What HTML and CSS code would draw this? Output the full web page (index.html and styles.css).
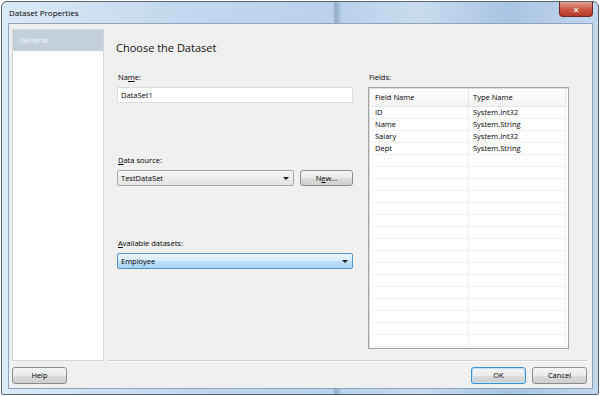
FILE: index.html
```html
<!DOCTYPE html>
<html lang="en">

<head>
    <meta charset="UTF-8">
    <title>Dataset Properties</title>
    <link rel="stylesheet" href="styles.css">
</head>

<body>
    <div class="window">
        <div class="titlebar">
            <span class="title">Dataset Properties</span>
            <span class="close">&#x2715;</span>
        </div>
        <div class="client">
            <div class="top">
                <ul class="nav">
                    <li class="active">General</li>
                </ul>
                <div class="main">
                    <h1>Choose the Dataset</h1>
                    <div class="cols">
                        <div class="left">
                            <label>Na<u>m</u>e:</label>
                            <div class="input">DataSet1</div>

                            <label class="gap"><u>D</u>ata source:</label>
                            <div class="row">
                                <div class="select">TestDataSet<span class="arrow"></span></div>
                                <div class="btn">N<u>e</u>w...</div>
                            </div>

                            <label class="gap"><u>A</u>vailable datasets:</label>
                            <div class="select blue">Employee<span class="arrow"></span></div>
                        </div>
                        <div class="right">
                            <label>Fields:</label>
                            <div class="grid">
                                <div class="head">
                                    <span>Field Name</span>
                                    <span>Type Name</span>
                                </div>
                                <div class="r"><span>ID</span><span>System.Int32</span></div>
                                <div class="r"><span>Name</span><span>System.String</span></div>
                                <div class="r"><span>Salary</span><span>System.Int32</span></div>
                                <div class="r"><span>Dept</span><span>System.String</span></div>
                                <div class="r"><span></span><span></span></div>
                                <div class="r"><span></span><span></span></div>
                                <div class="r"><span></span><span></span></div>
                                <div class="r"><span></span><span></span></div>
                                <div class="r"><span></span><span></span></div>
                                <div class="r"><span></span><span></span></div>
                                <div class="r"><span></span><span></span></div>
                                <div class="r"><span></span><span></span></div>
                                <div class="r"><span></span><span></span></div>
                                <div class="r"><span></span><span></span></div>
                                <div class="r"><span></span><span></span></div>
                                <div class="r"><span></span><span></span></div>
                                <div class="r"><span></span><span></span></div>
                                <div class="r"><span></span><span></span></div>
                                <div class="r"><span></span><span></span></div>
                                <div class="r"><span></span><span></span></div>
                            </div>
                        </div>
                    </div>
                </div>
            </div>
            <div class="footer">
                <div class="btn wide">Help</div>
                <div class="spacer"></div>
                <div class="btn wide default">OK</div>
                <div class="btn wide">Cancel</div>
            </div>
        </div>
    </div>
</body>

</html>
```

FILE: styles.css
```css
body {
    margin: 0;
    background: #fff;
}

ul {
    margin: 0;
    padding: 0;
    list-style: none;
}

h1 {
    margin: 0;
}

body {
    font-family: 'Open Sans', 'DejaVu Sans', sans-serif;
    font-size: 7.5px;
    color: #000;
}

.window {
    width: 598px;
    height: 394px;
    margin: 1px 0 0 1px;
    border: 1px solid #5a6470;
    border-radius: 6px 6px 2px 2px;
    background: linear-gradient(90deg, #dce9f6 0%, #c3d8ee 30%, #b9d1ea 55.5%, #8fa9c6 56%, #b9d1ea 57%, #c9dcef 70%, #a9c4e2 85%, #c3d7ec 100%);
    display: flex;
    flex-direction: column;
    box-sizing: border-box;
}

.titlebar {
    height: 21px;
    display: flex;
    align-items: flex-start;
    padding-left: 7px;
    position: relative;
}

.title {
    font-size: 8px;
    line-height: 22px;
    color: #000;
}

.close {
    position: absolute;
    right: 5px;
    top: 0;
    width: 34px;
    height: 15px;
    border: 1px solid #6e2a22;
    border-top: none;
    border-radius: 0 0 4px 4px;
    background: linear-gradient(#e6a396, #cc5a48 50%, #b83a28 100%);
    color: #fff;
    font-size: 8px;
    font-weight: bold;
    line-height: 15px;
    text-align: center;
    box-sizing: border-box;
}

.client {
    flex: 1;
    margin: 0 5px 5px 6px;
    border: 1px solid #8ea4be;
    background: #f0f0f0;
    display: flex;
    flex-direction: column;
}

.top {
    display: flex;
    padding: 5px 5px 0 3px;
    height: 332px;
}

.nav {
    width: 92px;
    background: #fff;
    border: 1px solid #d6d6d6;
    box-sizing: border-box;
}

.nav li {
    height: 21px;
    line-height: 21px;
    padding-left: 7px;
    background: #c3d0dc;
    color: #f4f7fa;
}

.main {
    flex: 1;
    margin-left: 4px;
    height: 332px;
    border-bottom: 1px solid #d2d2d2;
    box-shadow: 0 1px 0 #fff;
    padding: 11px 0 0 8px;
    box-sizing: border-box;
}

h1 {
    font-size: 11px;
    font-weight: normal;
    line-height: 16px;
    color: #111;
}

.cols {
    display: flex;
    margin-top: 16px;
}

.left {
    width: 236px;
    display: flex;
    flex-direction: column;
    margin-left: 1px;
}

.right {
    width: 201px;
    margin-left: 15px;
    display: flex;
    flex-direction: column;
}

label {
    line-height: 11px;
    height: 11px;
    margin-bottom: 4px;
    padding-left: 1px;
}

label.gap {
    margin-top: 52px;
}

.input {
    height: 16px;
    line-height: 14px;
    border: 1px solid #dcdcdc;
    background: #fff;
    padding-left: 3px;
    box-sizing: border-box;
}

.row {
    display: flex;
}

.select {
    height: 16px;
    flex: 1;
    line-height: 14px;
    border: 1px solid #a8a8a8;
    border-radius: 2px;
    background: linear-gradient(#f6f6f6, #e4e4e4);
    padding-left: 3px;
    box-sizing: border-box;
    display: flex;
    align-items: center;
    justify-content: space-between;
}

.select.blue {
    flex: none;
    border-color: #5a94c4;
    background: linear-gradient(#eaf5fd 0%, #d8ecfb 50%, #bfe0f7 51%, #a8d4f3 100%);
}

.arrow {
    width: 0;
    height: 0;
    border-left: 3px solid transparent;
    border-right: 3px solid transparent;
    border-top: 3px solid #1a1a1a;
    margin-right: 4px;
}

.btn {
    height: 16px;
    line-height: 14px;
    width: 53px;
    margin-left: 6px;
    border: 1px solid #8c8c8c;
    border-radius: 3px;
    background: linear-gradient(#f4f4f4 0%, #ebebeb 50%, #dddddd 51%, #cfcfcf 100%);
    text-align: center;
    box-sizing: border-box;
}

.grid {
    height: 262px;
    border: 1px solid #a3a3a3;
    box-shadow: inset 1px 1px 0 #ddd;
    background: #fff;
    box-sizing: border-box;
    padding: 1px 2px 0;
    overflow: hidden;
}

.head,
.r {
    display: grid;
    grid-template-columns: 98px 1fr;
}

.head {
    height: 17px;
    line-height: 17px;
    background: linear-gradient(#fff, #f3f3f3);
    border-bottom: 1px solid #e6e6e6;
}

.head span {
    padding-left: 4px;
    border-right: 1px solid #e4e4e4;
}

.r {
    height: 12px;
    line-height: 11px;
    border-bottom: 1px solid #f0f0f0;
    box-sizing: border-box;
}

.r span {
    padding-left: 4px;
    border-right: 1px solid #eeeeee;
}

.footer {
    display: flex;
    padding: 6px 5px 0 3px;
}

.footer .btn {
    margin-left: 0;
}

.btn.wide {
    width: 55px;
    height: 17px;
    line-height: 15px;
}

.footer .btn + .btn {
    margin-left: 6px;
}

.btn.default {
    border-color: #3c8fd0;
    box-shadow: inset 0 0 0 1px #bfe3fb;
}

.spacer {
    flex: 1;
}
```
